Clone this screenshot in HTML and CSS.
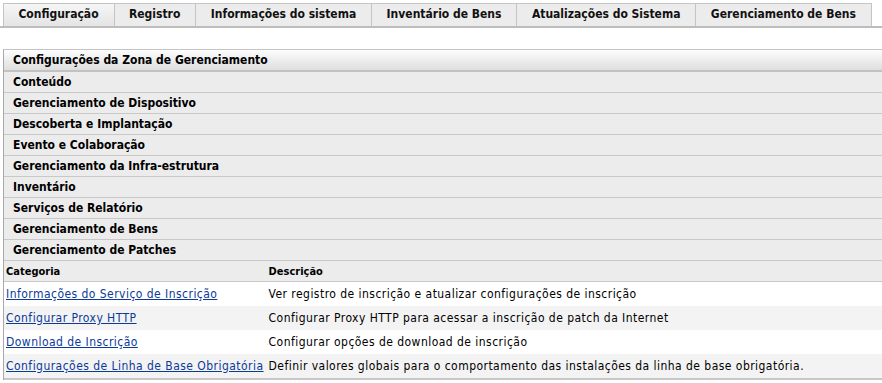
FILE: index.html
```html
<!DOCTYPE html>
<html lang="pt">
<head>
<meta charset="utf-8">
<title>Configuração</title>
<link rel="stylesheet" href="styles.css">
</head>
<body>
<div class="tabs">
  <div class="tab active">Configuração</div>
  <div class="tab">Registro</div>
  <div class="tab">Informações do sistema</div>
  <div class="tab">Inventário de Bens</div>
  <div class="tab">Atualizações do Sistema</div>
  <div class="tab">Gerenciamento de Bens</div>
</div>
<div class="tabline"></div>

<div class="panel">
  <div class="panel-head">Configurações da Zona de Gerenciamento</div>
  <div class="section">Conteúdo</div>
  <div class="section">Gerenciamento de Dispositivo</div>
  <div class="section">Descoberta e Implantação</div>
  <div class="section">Evento e Colaboração</div>
  <div class="section">Gerenciamento da Infra-estrutura</div>
  <div class="section">Inventário</div>
  <div class="section">Serviços de Relatório</div>
  <div class="section">Gerenciamento de Bens</div>
  <div class="section">Gerenciamento de Patches</div>
  <table class="grid">
    <thead>
      <tr><th class="c1">Categoria</th><th>Descrição</th></tr>
    </thead>
    <tbody>
      <tr><td class="c1"><a href="#">Informações do Serviço de Inscrição</a></td><td>Ver registro de inscrição e atualizar configurações de inscrição</td></tr>
      <tr class="alt"><td class="c1"><a href="#">Configurar Proxy HTTP</a></td><td>Configurar Proxy HTTP para acessar a inscrição de patch da Internet</td></tr>
      <tr><td class="c1"><a href="#">Download de Inscrição</a></td><td>Configurar opções de download de inscrição</td></tr>
      <tr class="alt"><td class="c1"><a href="#">Configurações de Linha de Base Obrigatória</a></td><td>Definir valores globais para o comportamento das instalações da linha de base obrigatória.</td></tr>
    </tbody>
  </table>
</div>
</body>
</html>
```
FILE: styles.css
```css
html, body { margin: 0; padding: 0; background: #fff; overflow: hidden; }
body {
  font-family: "DejaVu Sans Condensed", "DejaVu Sans", sans-serif;
  font-size: 12px;
  color: #000;
  padding: 3px 0 0 3px;
}
.tabs { display: flex; }
.tab {
  height: 22px;
  line-height: 21px;
  padding: 0 15px 0 14.4px;
  font-weight: bold;
  background: #ececec;
  border: 1px solid #c4c4c4;
  border-bottom: none;
  border-left: none;
  color: #111;
}
.tab:first-child { border-left: 1px solid #c4c4c4; }
.tab.active {
  background: linear-gradient(#f6f6f6, #e4e4e4);
}
.tabline {
  height: 2px;
  background: #bdbdbd;
  margin-left: -3px;
  margin-bottom: 21px;
}
.panel {
  border-left: 1px solid #a8a8a8;
  border-top: 1px solid #c4c4c4;
  margin-right: -20px;
}
.panel-head {
  height: 20px;
  line-height: 20px;
  padding-left: 9px;
  font-weight: bold;
  background: linear-gradient(#fdfdfd, #dedede);
  border-bottom: 2px solid #c2c2c2;
}
.section {
  height: 20px;
  line-height: 20px;
  padding-left: 9px;
  font-weight: bold;
  background: #ececec;
  border-bottom: 1px solid #c8c8c8;
}
.grid {
  width: 100%;
  border-collapse: collapse;
  font-size: 12px;
}
.grid th {
  text-align: left;
  background: #ececec;
  height: 20px;
  padding: 0 3px 0 2px;
  border-bottom: 1px solid #c8c8c8;
  font-weight: bold;
  font-size: 11px;
}
.grid td {
  height: 24px;
  padding: 0 3px 0 2px;
  white-space: nowrap;
  letter-spacing: 0.46px;
}
.grid .c1 { width: 1%; }
.grid tr.alt td { background: #f3f3f3; }
.grid tbody tr:last-child td { border-bottom: 2px solid #c8c8c8; }
.grid a { color: #0b3a9a; }
```
